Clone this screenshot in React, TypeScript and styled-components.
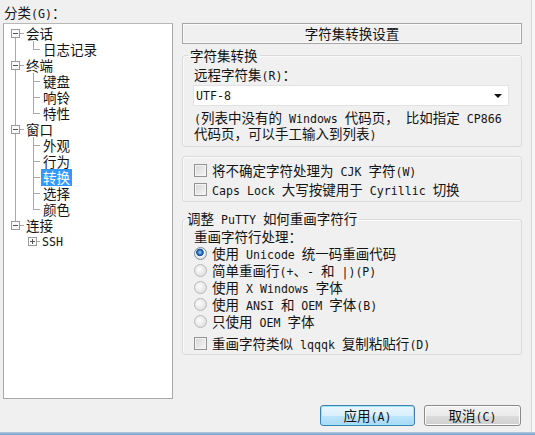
import styled, { createGlobalStyle } from 'styled-components';

const Global = createGlobalStyle`
  html, body {
    margin: 0;
    padding: 0;
    background: #f0f0f0;
  }
  body {
    font-family: "Noto Sans CJK SC", "Liberation Sans", sans-serif;
    font-size: 13.5px;
    line-height: 16px;
    color: #141414;
  }
  * {
    box-sizing: border-box;
  }
`;

const Lat = styled.span`
  font-family: "DejaVu Sans Mono", "Liberation Mono", monospace;
  font-size: 11.6px;
`;

// latin runs look like the half-width SimSun glyphs, so give them a mono face
function Txt({ children }: { children: string }) {
  const parts = children.split(/([\x20-\x7e]+)/);
  return <>{parts.map((p, i) => (i % 2 ? <Lat key={i}>{p}</Lat> : p))}</>;
}

const Window = styled.div`
  width: 535px;
  height: 435px;
  display: flex;
  flex-direction: column;
  background: #f0f0f0;
`;

const Body = styled.div`
  flex: 1;
  display: flex;
  min-height: 0;
`;

const Main = styled.div`
  flex: 1;
  display: flex;
  gap: 9px;
  padding: 4px 9px 6px 3px;
`;

const RightEdge = styled.div`
  width: 4px;
  border-left: 1px solid #d6d9dc;
  background: #f8f8f9;
`;

const BottomEdge = styled.div`
  height: 3px;
  background: linear-gradient(#b9cde0, #6e9cc6);
`;

const LeftCol = styled.div`
  width: 170px;
  display: flex;
  flex-direction: column;
`;

const Caption = styled.div`
  height: 19px;
  padding-left: 1px;
`;

const TreeBox = styled.div`
  flex: 1;
  margin-bottom: 27px;
  background: #fff;
  border: 1px solid #a9a9a9;
  border-top-color: #b8b8b8;
  padding-top: 1px;
`;

const TreeRow = styled.div`
  display: flex;
  height: 16px;
  align-items: center;
`;

const TreeLabel = styled.span<{ $selected?: boolean }>`
  padding: 0 2px;
  line-height: 17px;
  background: ${(p) => (p.$selected ? '#3399ff' : 'transparent')};
  color: ${(p) => (p.$selected ? '#fff' : '#141414')};
`;

type Row = {
  label: string;
  kind: 'root' | 'child' | 'sub';
  up?: boolean;
  down?: boolean;
  through?: boolean;
  last?: boolean;
  selected?: boolean;
};

const rows: Row[] = [
  { label: '会话', kind: 'root', down: true },
  { label: '日志记录', kind: 'child', through: true, last: true },
  { label: '终端', kind: 'root', up: true, down: true },
  { label: '键盘', kind: 'child', through: true },
  { label: '响铃', kind: 'child', through: true },
  { label: '特性', kind: 'child', through: true, last: true },
  { label: '窗口', kind: 'root', up: true, down: true },
  { label: '外观', kind: 'child', through: true },
  { label: '行为', kind: 'child', through: true },
  { label: '转换', kind: 'child', through: true, selected: true },
  { label: '选择', kind: 'child', through: true },
  { label: '颜色', kind: 'child', through: true, last: true },
  { label: '连接', kind: 'root', up: true },
  { label: 'SSH', kind: 'sub' },
];

const line = '#a8a8a8';

function Connector({ row }: { row: Row }) {
  const w = row.kind === 'root' ? 20 : row.kind === 'child' ? 37 : 36;
  return (
    <svg width={w} height={16} shapeRendering="crispEdges" style={{ flex: 'none' }}>
      {row.kind === 'root' && (
        <>
          {row.up && <path d="M11.5 0V4" stroke={line} />}
          {row.down && <path d="M11.5 13V16" stroke={line} />}
          <rect x={7.5} y={4.5} width={8} height={8} fill="#fafafa" stroke="#9a9a9a" />
          <path d="M9 8.5H14" stroke="#555" />
          <path d="M16 8.5H20" stroke={line} />
        </>
      )}
      {row.kind === 'child' && (
        <>
          {row.through && <path d="M11.5 0V16" stroke={line} />}
          <path d={row.last ? 'M29.5 0V8.5' : 'M29.5 0V16'} stroke={line} />
          <path d="M29.5 8.5H36" stroke={line} />
        </>
      )}
      {row.kind === 'sub' && (
        <>
          <rect x={24.5} y={4.5} width={8} height={8} fill="#fafafa" stroke="#9a9a9a" />
          <path d="M26 8.5H31M28.5 6V11" stroke="#555" />
          <path d="M33 8.5H36" stroke={line} />
        </>
      )}
    </svg>
  );
}

const RightCol = styled.div`
  width: 340px;
  display: flex;
  flex-direction: column;
  padding-top: 19px;
`;

const Header = styled.div`
  height: 21px;
  border: 1px solid #a6a6a6;
  box-shadow: inset 0 0 0 1px #f9f9f9;
  text-align: center;
  line-height: 18px;
`;

const Group = styled.fieldset<{ $top: number; $pb: number }>`
  margin: ${(p) => p.$top}px 0 0;
  min-width: 0;
  border: 1px solid #dadada;
  border-radius: 3px;
  box-shadow: inset 1px 1px 0 #fbfbfb;
  padding: 0 13px ${(p) => p.$pb}px 11px;
`;

const Legend = styled.legend<{ $shift: number }>`
  padding: 0 2px;
  margin-left: ${(p) => p.$shift}px;
  line-height: 16px;
`;

const Plain = styled.div<{ $top: number }>`
  margin-top: ${(p) => p.$top}px;
  border: 1px solid #dadada;
  border-radius: 3px;
  box-shadow: inset 1px 1px 0 #fbfbfb;
  padding: 4px 13px 2px 11px;
`;

const Label = styled.div<{ $pt?: number }>`
  padding-top: ${(p) => p.$pt ?? 0}px;
  line-height: 16px;
`;

const Combo = styled.div`
  margin: 1px -1px 0;
  height: 21px;
  background: #fff;
  border: 1px solid #e2e2e2;
  display: flex;
  align-items: center;
  justify-content: space-between;
  padding: 0 6px 0 2px;
`;

const Arrow = styled.span`
  width: 0;
  height: 0;
  border-left: 4px solid transparent;
  border-right: 4px solid transparent;
  border-top: 4px solid #111;
`;

const Note = styled.div`
  margin-top: 4px;
  line-height: 14px;
  white-space: nowrap;
`;

const OptList = styled.div`
  margin-top: 1px;
`;

const OptRow = styled.div<{ $h: number; $top?: number }>`
  display: flex;
  align-items: center;
  gap: 5px;
  height: ${(p) => p.$h}px;
  margin-top: ${(p) => p.$top ?? 0}px;
`;

const Check = styled.span`
  flex: none;
  width: 13px;
  height: 13px;
  border: 1px solid #939393;
  background: linear-gradient(135deg, #d6d6d6, #f6f6f6);
  box-shadow: inset 0 0 0 1px #f4f4f4;
`;

const Radio = styled.span<{ $on?: boolean }>`
  flex: none;
  width: 13px;
  height: 13px;
  border-radius: 50%;
  border: 1px solid ${(p) => (p.$on ? '#7d8fa3' : '#b8b8b8')};
  background: ${(p) =>
    p.$on
      ? 'radial-gradient(circle at 45% 40%, #9fd3fb 0, #3a85d0 1.8px, #154a8c 3.4px, #fafafa 4.2px, #dedede 6.5px)'
      : 'radial-gradient(circle at 40% 40%, #fdfdfd 0, #e4e4e4 6px)'};
`;

const Spacer = styled.div`
  flex: 1;
`;

const ButtonRow = styled.div`
  display: flex;
  justify-content: flex-end;
  gap: 9px;
  padding-right: 1px;
`;

const Button = styled.button<{ $w: number; $default?: boolean }>`
  width: ${(p) => p.$w}px;
  height: 21px;
  padding: 0;
  font: inherit;
  line-height: 18px;
  color: #141414;
  border-radius: 3px;
  border: 1px solid ${(p) => (p.$default ? '#3c7fb1' : '#8a8a8a')};
  background: ${(p) =>
    p.$default
      ? 'linear-gradient(#eaf6fd 0%, #d9f0fc 50%, #bee6fd 51%, #a7d9f5 100%)'
      : 'linear-gradient(#f2f2f2 0%, #ebebeb 50%, #dddddd 51%, #cfcfcf 100%)'};
  box-shadow: inset 0 0 0 1px ${(p) => (p.$default ? '#9fe4fb' : '#fcfcfc')};
`;

const radios = [
  '使用 Unicode 统一码重画代码',
  '简单重画行(+、- 和 |)(P)',
  '使用 X Windows 字体',
  '使用 ANSI 和 OEM 字体(B)',
  '只使用 OEM 字体',
];

export default function App() {
  return (
    <>
      <Global />
      <Window>
        <Body>
          <Main>
            <LeftCol>
              <Caption>
                <Txt>分类(G)：</Txt>
              </Caption>
              <TreeBox>
                {rows.map((r) => (
                  <TreeRow key={r.label}>
                    <Connector row={r} />
                    <TreeLabel $selected={r.selected}>
                      <Txt>{r.label}</Txt>
                    </TreeLabel>
                  </TreeRow>
                ))}
              </TreeBox>
            </LeftCol>

            <RightCol>
              <Header>字符集转换设置</Header>

              <Group $top={3} $pb={4}>
                <Legend $shift={-6}>字符集转换</Legend>
                <Label $pt={3}>
                  <Txt>远程字符集(R)：</Txt>
                </Label>
                <Combo>
                  <Txt>UTF-8</Txt>
                  <Arrow />
                </Combo>
                <Note>
                  <Txt>(列表中没有的 Windows 代码页， 比如指定 CP866</Txt>
                  <br />
                  <Txt>代码页，可以手工输入到列表)</Txt>
                </Note>
              </Group>

              <Plain $top={9}>
                <OptRow $h={19}>
                  <Check />
                  <span>
                    <Txt>将不确定字符处理为 CJK 字符(W)</Txt>
                  </span>
                </OptRow>
                <OptRow $h={19}>
                  <Check />
                  <span>
                    <Txt>Caps Lock 大写按键用于 Cyrillic 切换</Txt>
                  </span>
                </OptRow>
              </Plain>

              <Group $top={8} $pb={1}>
                <Legend $shift={-9}>
                  <Txt>调整 PuTTY 如何重画字符行</Txt>
                </Legend>
                <Label>重画字符行处理：</Label>
                <OptList>
                  {radios.map((t, i) => (
                    <OptRow key={t} $h={17}>
                      <Radio $on={i === 0} />
                      <span>
                        <Txt>{t}</Txt>
                      </span>
                    </OptRow>
                  ))}
                </OptList>
                <OptRow $h={19} $top={4}>
                  <Check />
                  <span>
                    <Txt>重画字符类似 lqqqk 复制粘贴行(D)</Txt>
                  </span>
                </OptRow>
              </Group>

              <Spacer />

              <ButtonRow>
                <Button $w={95} $default>
                  <Txt>应用(A)</Txt>
                </Button>
                <Button $w={97}>
                  <Txt>取消(C)</Txt>
                </Button>
              </ButtonRow>
            </RightCol>
          </Main>
          <RightEdge />
        </Body>
        <BottomEdge />
      </Window>
    </>
  );
}
